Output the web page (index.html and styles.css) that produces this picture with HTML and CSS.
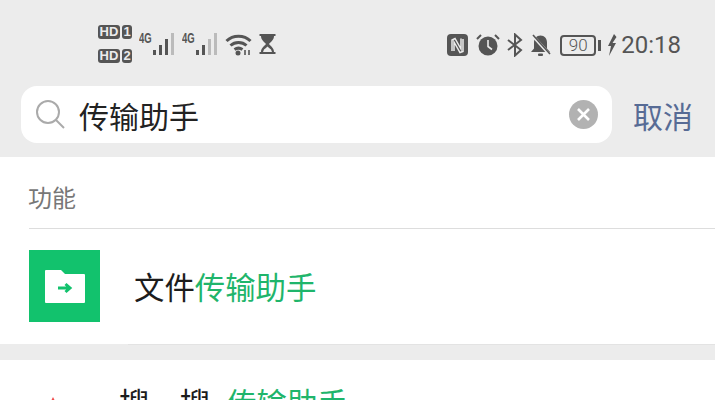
FILE: index.html
```html
<!DOCTYPE html>
<html lang="zh">
<head>
    <meta charset="UTF-8">
    <title>搜索</title>
    <link rel="stylesheet" href="styles.css">
</head>
<body>
<div class="page">
    <div class="top">
        <div class="status">
            <div class="status-left">
                <div class="hd-stack">
                    <div class="hd-line"><span class="hd">HD</span><span class="sim">1</span></div>
                    <div class="hd-line"><span class="hd">HD</span><span class="sim">2</span></div>
                </div>
                <div class="signal">
                    <span class="net">4G</span>
                    <svg width="22" height="24" viewBox="0 0 22 24">
                        <rect x="0" y="17" width="3" height="5" fill="#555"/>
                        <rect x="6" y="12" width="3" height="10" fill="#555"/>
                        <rect x="12" y="6" width="3" height="16" fill="#555"/>
                        <rect x="18" y="0" width="3" height="22" fill="#bbb"/>
                    </svg>
                </div>
                <div class="signal">
                    <span class="net">4G</span>
                    <svg width="22" height="24" viewBox="0 0 22 24">
                        <rect x="0" y="17" width="3" height="5" fill="#555"/>
                        <rect x="6" y="12" width="3" height="10" fill="#555"/>
                        <rect x="12" y="6" width="3" height="16" fill="#bbb"/>
                        <rect x="18" y="0" width="3" height="22" fill="#bbb"/>
                    </svg>
                </div>
                <svg class="wifi" width="27" height="23" viewBox="0 0 27 23" fill="none" stroke="#555" stroke-width="3">
                    <path d="M1.500 8C8 1.500 19 1.500 25.500 8"/>
                    <path d="M5.500 12.500C10 8.500 17 8.500 21.500 12.500"/>
                    <path d="M9.500 16.500C12 14.800 15 14.800 17.500 16.500"/>
                    <circle cx="13" cy="20" r="2.500" fill="#555" stroke="none"/>
                    <path d="M20 17v5M24 17v5" stroke-width="1.600"/>
                </svg>
                <svg class="glass" width="17" height="22" viewBox="0 0 17 22">
                    <path d="M0.500 1h16v2h-1.500c0 4-3.500 6-5 8 1.500 2 5 4 5 8h1.500v2h-16v-2H2c0-4 3.500-6 5-8-1.500-2-5-4-5-8H0.500z" fill="#555"/>
                    <path d="M5 16.500c1.500-1 2.500-2 3.500-3 1 1 2 2 3.500 3l1 2.500H4z" fill="#ececec"/>
                </svg>
            </div>
            <div class="status-right">
                <svg class="nfc" width="21" height="22" viewBox="0 0 21 22">
                    <rect width="21" height="22" rx="4" fill="#555"/>
                    <path d="M5 17V6l3-1.500L14 15V4.500M16 5v12.500l-3 1L7 8v9" fill="none" stroke="#ececec" stroke-width="1.500"/>
                </svg>
                <svg class="alarm" width="24" height="22" viewBox="0 0 24 22">
                    <circle cx="12" cy="12" r="9.500" fill="#555"/>
                    <path d="M12 6v6.500l4 3" fill="none" stroke="#ececec" stroke-width="1.600"/>
                    <path d="M1 5l4-4M23 5l-4-4" stroke="#555" stroke-width="2"/>
                </svg>
                <svg class="bt" width="18" height="24" viewBox="0 0 18 24" fill="none" stroke="#555" stroke-width="2">
                    <path d="M2 7l13 10-6 5.500V1.500l6 5.500L2 17"/>
                </svg>
                <svg class="bell" width="21" height="23" viewBox="0 0 21 23">
                    <path d="M10.500 1.500c4 0 6.500 3 6.500 7v6l3 3.500H1l3-3.500v-6c0-4 2.500-7 6.500-7z" fill="#555"/>
                    <rect x="8" y="19.500" width="5" height="2.500" rx="1" fill="#555"/>
                    <path d="M2 1l18 20" stroke="#ececec" stroke-width="3"/>
                    <path d="M3 1l17 19" stroke="#555" stroke-width="1.600"/>
                </svg>
                <div class="battery"><span class="level">90</span></div>
                <span class="nub"></span>
                <svg class="bolt" width="10" height="22" viewBox="0 0 10 22">
                    <path d="M7 0L1 12h3l-2 10 7-13H5.500L9.500 3z" fill="#555"/>
                </svg>
                <span class="clock">20:18</span>
            </div>
        </div>
        <div class="search-row">
            <div class="search-box">
                <svg width="29" height="29" viewBox="0 0 29 29" fill="none" stroke="#aaa" stroke-width="2">
                    <circle cx="12" cy="12" r="11"/>
                    <path d="M20 20l8 8"/>
                </svg>
                <span class="query">传输助手</span>
                <svg class="clear" width="29" height="29" viewBox="0 0 29 29">
                    <circle cx="14.500" cy="14.500" r="14.500" fill="#b2b2b2"/>
                    <path d="M9 9l11 11M20 9L9 20" stroke="#fff" stroke-width="2.600"/>
                </svg>
            </div>
            <span class="cancel">取消</span>
        </div>
    </div>

    <div class="section">
        <div class="section-title"><span>功能</span></div>
        <div class="result">
            <div class="file-icon">
                <svg width="40" height="33" viewBox="0 0 40 33">
                    <path d="M0 1a1 1 0 0 1 1-1h15l4 4h19a1 1 0 0 1 1 1v27a1 1 0 0 1-1 1H1a1 1 0 0 1-1-1z" fill="#fff"/>
                    <path d="M13 18h12M20.500 14l4.500 4-4.500 4" fill="none" stroke="#12c26d" stroke-width="3"/>
                </svg>
            </div>
            <div class="result-name">文件<em>传输助手</em></div>
        </div>
    </div>

    <div class="gap"></div>

    <div class="section">
        <div class="result search-one">
            <svg class="sou-icon" width="30" height="30" viewBox="0 0 30 30">
                <path d="M15 0l4 8-8 0z" fill="#f04b4b"/>
            </svg>
            <div class="result-name">搜一搜<em class="keyword">传输助手</em></div>
        </div>
    </div>
</div>
</body>
</html>
```

FILE: styles.css
```css
html, body {
    margin: 0;
    height: 100%;
    overflow: hidden;
}
body {
    font-family: "Noto Sans CJK SC", "Noto Sans", sans-serif;
    background: white;
}
.page {
    width: 715px;
    height: 400px;
    overflow: hidden;
}
.top {
    background: #ececec;
    height: 157px;
}
.status {
    height: 86px;
    display: flex;
    justify-content: space-between;
    box-sizing: border-box;
    padding: 25px 34px 0 98px;
}
.status-left {
    display: flex;
    gap: 7px;
    align-items: flex-start;
}
.hd-stack {
    display: flex;
    flex-direction: column;
    gap: 10px;
}
.hd-line {
    display: flex;
    gap: 2px;
    height: 14px;
}
.hd, .sim {
    font-family: "Liberation Sans", sans-serif;
    font-weight: bold;
    font-size: 13px;
    line-height: 14px;
    color: #ececec;
    background: #555;
    border-radius: 3px;
    text-align: center;
}
.hd {
    width: 22px;
}
.sim {
    width: 10px;
}
.signal {
    display: flex;
    align-items: flex-start;
    margin-top: 8px;
}
.net {
    font-family: "Liberation Sans", sans-serif;
    font-weight: bold;
    font-size: 14px;
    line-height: 10px;
    color: #555;
    transform: scaleX(0.68);
    transform-origin: left;
    width: 14px;
}
.wifi, .glass {
    margin-top: 8px;
}
.status-right {
    display: flex;
    align-items: center;
    height: 40px;
}
.alarm {
    margin-left: 8px;
}
.bt {
    margin-left: 6px;
}
.bell {
    margin-left: 6px;
}
.battery {
    width: 36px;
    height: 21px;
    box-sizing: border-box;
    border: 2px solid #555;
    border-radius: 4px;
    display: flex;
    align-items: center;
    justify-content: center;
    margin-left: 9px;
}
.level {
    font-family: Roboto, sans-serif;
    font-weight: 300;
    font-size: 17px;
    color: #555;
}
.nub {
    width: 3px;
    height: 11px;
    background: #555;
    margin-left: 2px;
}
.bolt {
    margin-left: 6px;
}
.clock {
    font-family: Roboto, sans-serif;
    font-size: 24px;
    color: #555;
    margin-left: 4px;
}
.search-row {
    display: flex;
    align-items: center;
    padding-left: 21px;
}
.search-box {
    width: 591px;
    height: 57px;
    box-sizing: border-box;
    background: white;
    border-radius: 16px;
    display: flex;
    align-items: center;
    padding: 0 14px 0 15px;
}
.query {
    font-size: 30px;
    color: #222;
    margin-left: 14px;
    flex: 1;
}
.cancel {
    font-size: 30px;
    color: #576b95;
    margin-left: 21px;
}
.section {
    background: white;
}
.section-title {
    height: 72px;
    margin-left: 29px;
    box-sizing: border-box;
    border-bottom: 1px solid #ddd;
    display: flex;
    align-items: center;
    padding-top: 8px;
    font-size: 24px;
    color: #777;
}
.section-title span {
    margin-left: -1px;
}
.result {
    height: 115px;
    display: flex;
    align-items: center;
    padding: 0 0 0 29px;
    gap: 34px;
}
.file-icon {
    width: 71px;
    height: 72px;
    background: #12c26d;
    display: flex;
    align-items: center;
    justify-content: center;
    margin-top: -1px;
}
.result-name {
    font-size: 30.4px;
    color: #1c1c1c;
    margin-top: -2px;
}
.result-name em {
    font-style: normal;
    color: #1fb56b;
}
.gap {
    height: 16px;
    background: linear-gradient(#e3e3e3, #e3e3e3) no-repeat 128px 0 / 100% 1px, #ececec;
}
.search-one {
    align-items: flex-start;
    padding: 22px 0 0 38px;
    gap: 51px;
}
.sou-icon {
    margin-top: 15px;
}
.keyword {
    margin-left: 16px;
}
```
